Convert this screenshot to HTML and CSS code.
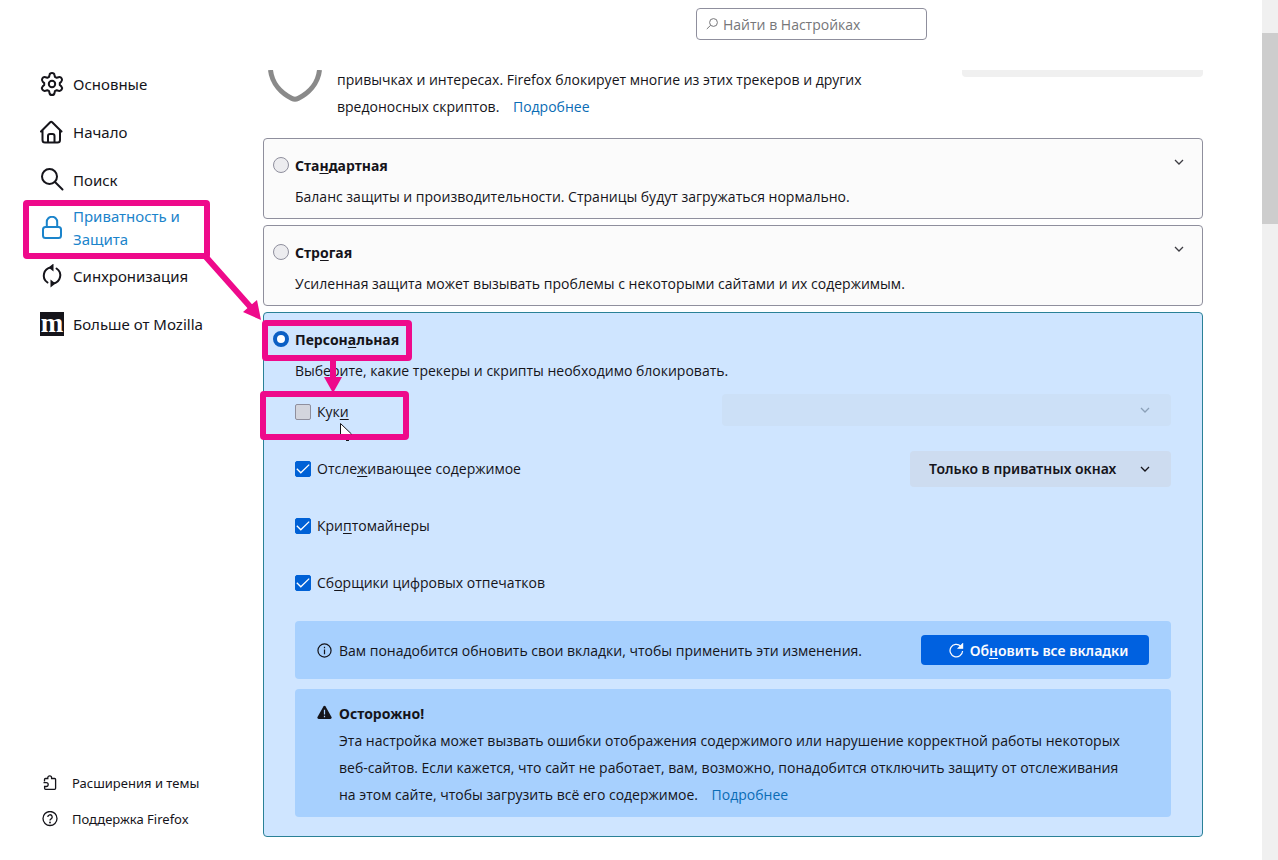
FILE: index.html
```html
<!DOCTYPE html>
<html lang="ru">
<head>
    <meta charset="UTF-8">
    <meta name="viewport" content="width=device-width, initial-scale=1.0">
    <title>Настройки</title>
    <link rel="stylesheet" href="styles.css">
</head>
<body>
    <aside class="sidebar">
        <nav class="categories">
            <a href="#general">
                <svg viewBox="0 0 24 24"><path d="M9.500 3q.3-2 2.500-2t2.500 2l.4 1.800 1.800 1 1.800-.6q2.200-.5 3.200 1.200t-.5 3.300L19.800 11v2l1.400 1.300q1.500 1.600.5 3.300t-3.200 1.200l-1.800-.6-1.800 1-.4 1.800q-.3 2-2.500 2t-2.500-2l-.4-1.800-1.800-1-1.800.6q-2.200.5-3.200-1.200t.5-3.300L4.200 13v-2L2.800 9.700q-1.500-1.600-.5-3.300t3.200-1.200l1.800.6 1.800-1z"/><circle cx="12" cy="12" r="3.200"/></svg>
                <span>Основные</span>
            </a>
            <a href="#home">
                <svg viewBox="0 0 24 24"><path d="M1 11.500 10.200 2.200q1-1 2 0L21.500 11.500M2.500 10.500V20q0 2.500 2.500 2.500h12.500q2.500 0 2.500-2.500v-9.500M8 22.500V16q0-2 2-2h2.500q2 0 2 2v6.500"/></svg>
                <span>Начало</span>
            </a>
            <a href="#search">
                <svg viewBox="0 0 24 24"><circle cx="9.500" cy="8.500" r="7.500"/><path d="m15 14 7.500 7.500"/></svg>
                <span>Поиск</span>
            </a>
            <a href="#privacy" class="selected">
                <svg viewBox="0 0 24 24"><rect x="3" y="11" width="18" height="11" rx="2.500"/><path d="M6.800 11V6a5.200 5.200 0 0 1 10.400 0v5"/></svg>
                <span>Приватность и Защита</span>
            </a>
            <a href="#sync">
                <svg viewBox="0 0 24 24"><path d="M7.500 18.500A8.200 8.200 0 0 1 11 3.500h1M16.500 4.500A8.200 8.200 0 0 1 13 19.500h-1"/><path class="solid" d="M13.500-.5v8L8.500 3.500zM10.500 15.500v8l5-4z"/></svg>
                <span>Синхронизация</span>
            </a>
            <a href="#more">
                <b class="moz">m</b>
                <span>Больше от Mozilla</span>
            </a>
        </nav>
        <nav class="help">
            <a href="#addons">
                <svg viewBox="0 0 16 16"><path d="M2.500 6.500v-2q0-1 1-1h2.300V2.700a1.900 1.900 0 0 1 3.800 0v.8h3q1 0 1 1v8.800q0 1-1 1h-9q-1 0-1-1v-1.800h1.700a1.900 1.900 0 0 0 0-3.800H1.500"/></svg>
                <span>Расширения и темы</span>
            </a>
            <a href="#support">
                <svg viewBox="0 0 16 16"><circle cx="8" cy="7.500" r="7"/><path d="M5.800 6a2.200 2.200 0 1 1 3.300 1.900Q8 8.500 8 9.500"/><circle class="solid" cx="8" cy="11.500" r=".9"/></svg>
                <span>Поддержка Firefox</span>
            </a>
        </nav>
    </aside>

    <main class="content">
        <div class="search">
            <label class="search-box">
                <svg viewBox="0 0 12 12"><circle cx="7.500" cy="4.500" r="3.900"/><path d="M4.600 7.300.8 11"/></svg>
                <input type="search" placeholder="Найти в Настройках" aria-label="Найти в Настройках">
            </label>
        </div>

        <section class="intro">
            <svg class="shield" viewBox="0 0 54 34"><path d="M2.500 0C4 14 14 23.500 24 28.500q3 1.500 6 0C40 23.500 50 14 51.500 0"/></svg>
            <p>привычках и интересах. Firefox блокирует многие из этих трекеров и других<br>вредоносных скриптов. <a class="more" href="#learn">Подробнее</a></p>
            <div class="meter"></div>
        </section>

        <section class="option">
            <input type="radio" name="mode" id="standard">
            <div class="option-body">
                <label class="title" for="standard">Ста<u>н</u>дартная</label>
                <p>Баланс защиты и производительности. Страницы будут загружаться нормально.</p>
            </div>
            <button class="expand" aria-label="Развернуть"><svg viewBox="0 0 10 6"><path d="m1 1 4 4 4-4"/></svg></button>
        </section>

        <section class="option">
            <input type="radio" name="mode" id="strict">
            <div class="option-body">
                <label class="title" for="strict">Стр<u>о</u>гая</label>
                <p>Усиленная защита может вызывать проблемы с некоторыми сайтами и их содержимым.</p>
            </div>
            <button class="expand" aria-label="Развернуть"><svg viewBox="0 0 10 6"><path d="m1 1 4 4 4-4"/></svg></button>
        </section>

        <section class="option active">
            <input type="radio" name="mode" id="custom" checked>
            <div class="option-body">
                <label class="title" for="custom">Персон<u>а</u>льная</label>
                <p>Выберите, какие трекеры и скрипты необходимо блокировать.</p>

                <div class="rows">
                    <div class="row">
                        <input type="checkbox" id="cookies">
                        <label for="cookies">Кук<u>и</u></label>
                        <div class="drop wide">
                            <select disabled aria-label="Куки"><option></option></select>
                            <svg viewBox="0 0 10 6"><path d="m1 1 4 4 4-4"/></svg>
                        </div>
                    </div>
                    <div class="row">
                        <input type="checkbox" id="tracking" checked>
                        <label for="tracking">Отсле<u>ж</u>ивающее содержимое</label>
                        <div class="drop">
                            <select aria-label="Отслеживающее содержимое"><option>Только в приватных окнах</option></select>
                            <svg viewBox="0 0 10 6"><path d="m1 1 4 4 4-4"/></svg>
                        </div>
                    </div>
                    <div class="row">
                        <input type="checkbox" id="miners" checked>
                        <label for="miners">Кри<u>п</u>томайнеры</label>
                    </div>
                    <div class="row">
                        <input type="checkbox" id="fingerprints" checked>
                        <label for="fingerprints">Сб<u>о</u>рщики цифровых отпечатков</label>
                    </div>
                </div>

                <div class="notice reload">
                    <svg class="icon" viewBox="0 0 16 16"><circle cx="8" cy="8" r="7"/><path d="M8 7v5M8 4v1.500"/></svg>
                    <p>Вам понадобится обновить свои вкладки, чтобы применить эти изменения.</p>
                    <button>
                        <svg viewBox="0 0 16 16"><path d="M14.500 8.500A6.700 6.700 0 1 1 12.500 3.300L14 5"/><path d="M14.500 1v4.500H10z" fill="currentColor"/></svg>
                        <span>Об<u>н</u>овить все вкладки</span>
                    </button>
                </div>
                <div class="notice warning">
                    <svg class="icon" viewBox="0 0 16 16"><path class="solid" d="M6.800 1.500q1.200-1.600 2.400 0l6.300 11.300q.6 2-1.300 2.200H1.800Q-.1 14.800.5 12.800z"/><path class="mark" d="M8 5v5M8 11.500V13"/></svg>
                    <div>
                        <h2>Осторожно!</h2>
                        <p>Эта настройка может вызвать ошибки отображения содержимого или нарушение корректной работы некоторых<br>веб-сайтов. Если кажется, что сайт не работает, вам, возможно, понадобится отключить защиту от отслеживания<br>на этом сайте, чтобы загрузить всё его содержимое. <a class="more" href="#warning">Подробнее</a></p>
                    </div>
                </div>
            </div>
        </section>
    </main>

    <div class="scrollbar"><div class="thumb"></div></div>

    <!-- highlight boxes, arrows and the mouse pointer -->
    <svg class="marks" width="420" height="450" viewBox="0 0 420 450">
        <rect x="26" y="203" width="181" height="53" rx="1"/>
        <rect x="265" y="323" width="144" height="35" rx="1"/>
        <rect x="263" y="394" width="143" height="43" rx="1"/>
        <path d="M206 257l48 54M333 360v18"/>
        <path class="head" d="M261 320l-18-8 14-12zM324 377h18l-9 16z"/>
        <path class="pointer" d="M340.500 434v-10.500l11 10.500"/>
        <path class="tip" d="M346 440.500h3"/>
    </svg>
</body>
</html>
```
FILE: styles.css
```css
* {
    margin: 0;
    padding: 0;
    box-sizing: border-box;
}
body {
    display: flex;
    min-height: 100vh;
    position: relative;
    background-color: #fff;
    color: #15141a;
    font-family: "Open Sans", "Noto Sans", sans-serif;
    font-size: 14px;
    line-height: 27px;
}
input, button, select {
    font: inherit;
    color: inherit;
}
a {
    color: inherit;
    text-decoration: none;
}
u {
    text-underline-offset: 2px;
}
svg {
    fill: none;
    stroke: currentColor;
    flex-shrink: 0;
}
.solid {
    fill: currentColor;
    stroke: none;
}

/* left column */
.sidebar {
    width: 263px;
    flex-shrink: 0;
    display: flex;
    flex-direction: column;
    justify-content: space-between;
    padding: 60px 56px 23px 40px;
    font-family: "Noto Sans", sans-serif;
}
.categories a {
    display: flex;
    align-items: center;
    gap: 9px;
    height: 48px;
    font-size: 15px;
    line-height: 23px;
}
.categories svg, .moz {
    width: 24px;
    height: 24px;
    stroke-width: 2;
    stroke-linecap: round;
    stroke-linejoin: round;
}
.categories .selected {
    color: #1b84cb;
}
.moz {
    flex-shrink: 0;
    background-color: #15141a;
    color: #fff;
    font-family: "Liberation Serif", serif;
    font-size: 27px;
    line-height: 22px;
    text-align: center;
}
.help a {
    display: flex;
    align-items: center;
    gap: 14px;
    height: 36px;
    padding-left: 2px;
    font-size: 13px;
    white-space: nowrap;
}
.help svg {
    width: 16px;
    height: 16px;
    stroke-width: 1.3;
}

/* right column */
.content {
    flex: 1;
    min-width: 0;
    padding: 0 59px 23px 0;
}
.search {
    display: flex;
    justify-content: flex-end;
    height: 66px;
    padding: 8px 276px 0 0;
}
.search-box {
    display: flex;
    align-items: center;
    gap: 5px;
    width: 231px;
    height: 32px;
    padding: 0 9px;
    border: 1px solid #8f8f9d;
    border-radius: 4px;
    color: #767679;
}
.search-box svg {
    width: 12px;
    height: 12px;
}
.search-box input {
    width: 100%;
    border: none;
    outline: none;
    background: none;
}
.search-box input::placeholder {
    color: #767679;
}
.intro {
    display: flex;
    margin-bottom: 18px;
}
.shield {
    width: 54px;
    height: 34px;
    margin: 4px 15px 0 5px;
    color: #8a8a8a;
    stroke-width: 5;
}
.intro p {
    flex: 1;
    white-space: nowrap;
}
.more {
    margin-left: 10px;
    color: #0a6cb5;
}
.meter {
    width: 241px;
    height: 7px;
    margin-top: 4px;
    border-radius: 0 0 4px 4px;
    background-color: #f0f0f0;
}

.option {
    display: flex;
    align-items: flex-start;
    margin-bottom: 6px;
    padding: 13px 31px 8px 9px;
    border: 1px solid #8f8f9d;
    border-radius: 4px;
    background-color: #fbfbfb;
    position: relative;
}
.option.active {
    margin-bottom: 0;
    padding-bottom: 19px;
    border-color: #2a8197;
    background-color: #cfe5ff;
}
.option-body {
    flex: 1;
    min-width: 0;
}
.title, .warning h2 {
    font-family: "Noto Sans", sans-serif;
    font-size: 14px;
    font-weight: bold;
}
.title {
    display: block;
    margin-bottom: 4px;
}
input[type="radio"], input[type="checkbox"] {
    appearance: none;
    flex-shrink: 0;
    width: 16px;
    height: 16px;
    margin-right: 6px;
    border: 1px solid #8f8f9d;
    border-radius: 2px;
    background-color: #d3d5dd;
}
input[type="radio"] {
    margin-top: 5px;
    border-radius: 50%;
    background-color: #ececef;
}
input[type="radio"]:checked {
    border: 4px solid #0b5fc4;
    background-color: #fff;
}
input[type="checkbox"]:checked {
    border-color: #0061d6;
    background: #0061d6 url("data:image/svg+xml,%3Csvg xmlns='http://www.w3.org/2000/svg' viewBox='0 0 14 14'%3E%3Cpath d='M.8 6.800l4 4 8.400-8.200' fill='none' stroke='white' stroke-width='1.300'/%3E%3C/svg%3E");
}
.expand {
    position: absolute;
    top: 11px;
    right: 11px;
    width: 24px;
    height: 24px;
    border: none;
    background: none;
    color: #3d3c42;
    line-height: 0;
}
.expand svg, .drop svg {
    width: 10px;
    height: 6px;
    stroke-width: 1.3;
}
.rows {
    margin-top: -1px;
    padding-bottom: 10px;
}
.row {
    display: flex;
    align-items: center;
    height: 57px;
}
.drop {
    display: grid;
    align-items: center;
    width: 261px;
    margin-left: auto;
}
.drop select, .drop svg {
    grid-area: 1 / 1;
}
.drop svg {
    justify-self: end;
    margin-right: 21px;
    pointer-events: none;
}
.drop select {
    appearance: none;
    width: 100%;
    height: 36px;
    padding: 0 19px;
    border: none;
    border-radius: 4px;
    background-color: #cddcf0;
    font-family: "Noto Sans", sans-serif;
    font-weight: 600;
}
.drop.wide {
    width: 449px;
    margin-bottom: 4px;
    color: #8ba0b8;
}
.drop.wide select {
    height: 32px;
    background-color: #cce0f7;
    opacity: 1;
}

.notice {
    display: flex;
    gap: 7px;
    padding: 11px 22px 9px;
    border-radius: 4px;
    background-color: #a7d0fe;
    white-space: nowrap;
}
.notice .icon {
    width: 15px;
    height: 15px;
    stroke-width: 1.3;
}
.reload {
    align-items: center;
    margin-bottom: 10px;
    padding: 14px 22px;
}
.reload button {
    display: flex;
    align-items: center;
    justify-content: center;
    gap: 6px;
    width: 228px;
    height: 30px;
    margin-left: auto;
    padding-left: 7px;
    border: none;
    border-radius: 4px;
    background-color: #0061e0;
    color: #fbfbfe;
    font-family: "Noto Sans", sans-serif;
    font-weight: 600;
}
.reload button svg {
    width: 15px;
    height: 15px;
    stroke-width: 1.3;
}
.warning .icon {
    margin-top: 5px;
}
.mark {
    stroke: #a7d0fe;
}

.scrollbar {
    width: 16px;
    flex-shrink: 0;
    padding-top: 33px;
    background-color: #f0f0f0;
}
.thumb {
    height: 191px;
    background-color: #cdcdcd;
}

.marks {
    position: absolute;
    top: 0;
    left: 0;
    pointer-events: none;
    stroke: #ee0a8b;
    stroke-width: 6;
}
.marks .pointer {
    fill: #fff;
    stroke: #15141a;
    stroke-width: 1;
}
.marks .tip {
    stroke: #15141a;
    stroke-width: 1;
}
.marks .head {
    fill: #ee0a8b;
    stroke: none;
}
```
